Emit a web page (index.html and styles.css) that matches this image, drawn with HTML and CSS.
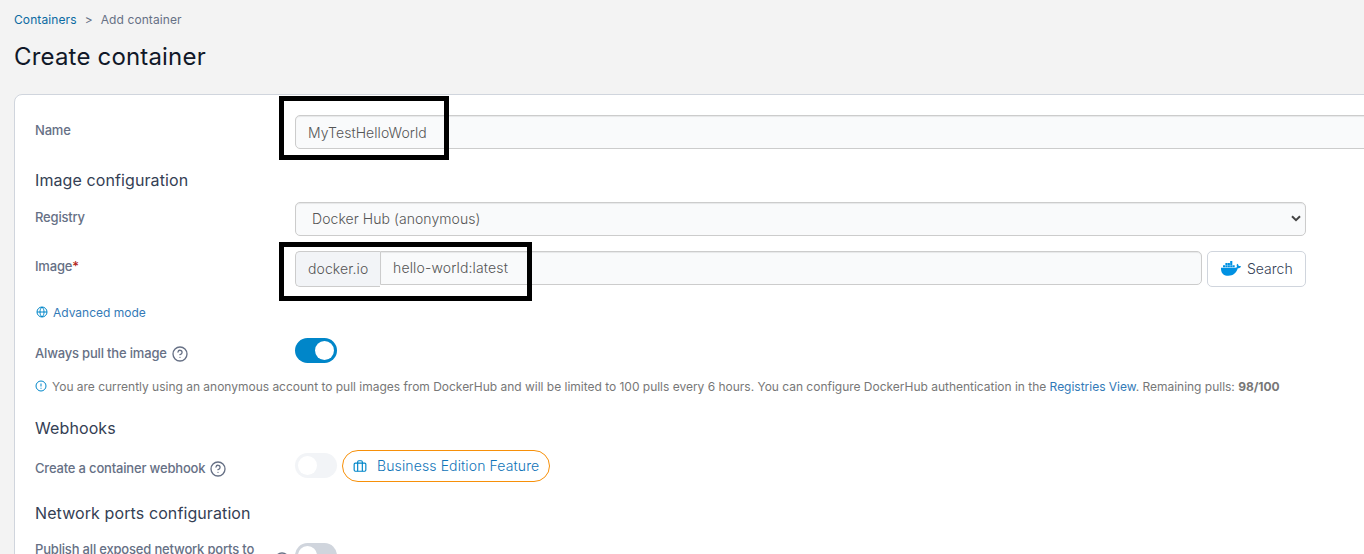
FILE: index.html
```html
<!DOCTYPE html>
<html lang="en">
<head>
<meta charset="utf-8">
<title>Create container</title>
<link rel="stylesheet" href="styles.css">
</head>
<body>
<header class="page-header">
  <nav class="breadcrumbs"><a class="crumb-link">Containers</a><span class="separator">&gt;</span><span class="crumb">Add container</span></nav>
  <h1 class="page-title">Create container</h1>
</header>
<main class="card">
  <div class="row row-name">
    <label class="label"><span>Name</span></label>
    <div class="field field-name"><span>MyTestHelloWorld</span></div>
    <div class="highlight highlight-name"></div>
  </div>
  <h2 class="section section-image">Image configuration</h2>
  <div class="row row-registry">
    <label class="label"><span>Registry</span></label>
    <div class="field field-select"><span>Docker Hub (anonymous)</span>
      <svg class="chevron" viewBox="0 0 10 7"><path d="M1 1.2 5 5.2 9 1.2" fill="none" stroke="#444" stroke-width="2"/></svg>
    </div>
  </div>
  <div class="row row-image">
    <label class="label"><span>Image</span><span class="required">*</span></label>
    <div class="addon"><span>docker.io</span></div>
    <div class="field field-image"><span>hello-world:latest</span></div>
    <button class="search">
      <svg class="whale" viewBox="0 0 20 15" fill="#0091e2"><path d="M0 6.700h14.300c.8 0 1.400-.2 1.800-.6-.6-1-.6-2.300.2-3.300.9.600 1.300 1.300 1.400 2.200.8-.1 1.700 0 2.300.4-.4 1.100-1.400 1.800-3.200 1.800C15.300 12 12 14.700 7.400 14.700 2.700 14.700-.3 12.200 0 6.700z"/><path d="M2 4.300h2.100v2H2zM4.400 4.300h2.100v2H4.400zM6.800 4.300h2.100v2H6.800zM9.200 4.300h2.100v2H9.200zM11.600 4.300h2.100v2h-2.100zM4.400 2.100h2.100v2H4.400zM6.800 2.100h2.100v2H6.800zM9.200 2.100h2.100v2H9.200zM9.200 0h2.100v1.900H9.200z"/></svg>
      <span>Search</span>
    </button>
    <div class="highlight highlight-image"></div>
  </div>
  <div class="advanced">
    <svg class="globe" viewBox="0 0 24 24"><circle cx="12" cy="12" r="10"/><path d="M2 12h20M12 2c3 3 4 6 4 10s-1 7-4 10c-3-3-4-6-4-10s1-7 4-10z"/></svg>
    <a>Advanced mode</a>
  </div>
  <div class="row row-pull">
    <label class="label"><span>Always pull the image</span>
      <svg class="help" viewBox="0 0 24 24"><circle cx="12" cy="12" r="10.500"/><path d="M9 9a3 3 0 0 1 6 1c0 2-3 3-3 3M12 17h.01"/></svg>
    </label>
    <div class="toggle toggle-on"><i class="knob"></i></div>
  </div>
  <div class="info">
    <svg class="alert" viewBox="0 0 24 24"><circle cx="12" cy="12" r="10"/><path d="M12 7v6M12 15.500v2"/></svg>
    <p>You are currently using an anonymous account to pull images from DockerHub and will be limited to 100 pulls every 6 hours. You can configure DockerHub authentication in the <a>Registries View</a>. Remaining pulls: <b>98/100</b></p>
  </div>
  <h2 class="section section-webhooks">Webhooks</h2>
  <div class="row row-webhook">
    <label class="label"><span>Create a container webhook</span>
      <svg class="help" viewBox="0 0 24 24"><circle cx="12" cy="12" r="10.500"/><path d="M9 9a3 3 0 0 1 6 1c0 2-3 3-3 3M12 17h.01"/></svg>
    </label>
    <div class="toggle toggle-disabled"><i class="knob"></i></div>
    <div class="badge">
      <svg class="briefcase" viewBox="0 0 24 24"><rect x="2" y="7" width="20" height="14" rx="2"/><path d="M16 21V5a2 2 0 0 0-2-2h-4a2 2 0 0 0-2 2v16"/></svg>
      <span>Business Edition Feature</span>
    </div>
  </div>
  <h2 class="section section-ports">Network ports configuration</h2>
  <div class="row row-publish">
    <label class="label"><span class="publish-text">Publish all exposed network ports to</span>
      <svg class="help" viewBox="0 0 24 24"><circle cx="12" cy="12" r="10.500"/><path d="M9 9a3 3 0 0 1 6 1c0 2-3 3-3 3M12 17h.01"/></svg>
    </label>
    <div class="toggle"><i class="knob"></i></div>
  </div>
</main>
</body>
</html>
```
FILE: styles.css
```css
* { box-sizing: border-box; }
html, body { height: 554px; overflow: hidden; }
body { margin: 0; background: #f3f3f3; font-family: Inter, "Liberation Sans", sans-serif; font-size: 14px; color: #555; }
.page-header { height: 94px; padding: 12px 14px 0; }
.breadcrumbs { display: flex; height: 16px; line-height: 16px; font-size: 12px; letter-spacing: .1px; color: #667085; }
.crumb-link { color: #0b6aa2; }
.separator { margin: 0 8px; }
.page-title { margin: 14px 0 0; font-size: 24px; line-height: 30px; font-weight: 400; letter-spacing: .18px; color: #101828; }
.card { width: 1400px; height: 480px; margin-left: 14px; padding: 20px 0 0 20px; background: #fff; border: 1px solid #d0d5dd; border-radius: 8px; }
.row { display: flex; align-items: flex-start; position: relative; }
.label { display: flex; flex: none; width: 260px; font-size: 13px; line-height: 18px; font-weight: 500; letter-spacing: -.18px; color: #667085; }
.required { color: #b42318; }
.field { display: flex; align-items: center; height: 34px; padding: 0 12px 1px; border: 1px solid #ccc; border-radius: 5px; background: #f9fafb; box-shadow: inset 0 1px 1px rgba(0,0,0,.075); font-weight: 300; letter-spacing: .06px; }
.row-name .label { padding-top: 6px; }
.field-name { width: 1110px; padding-top: 1px; padding-bottom: 0; }
.section { margin: 0; height: 22px; font-size: 16px; line-height: 22px; font-weight: 400; letter-spacing: .1px; color: #344054; }
.section-image { margin-top: 20px; }
.row-registry { margin-top: 11px; }
.row-registry .label, .row-image .label { padding-top: 6px; }
.field-select { width: 1011px; padding: 0 4px 1px 16px; justify-content: space-between; }
.chevron { width: 10px; height: 7px; }
.row-image { margin-top: 15px; height: 36px; }
.addon { display: flex; align-items: center; width: 85px; height: 36px; padding: 0 0 1px 12px; border: 1px solid #ccc; border-right: 0; border-radius: 5px 0 0 5px; background: #f2f4f7; font-weight: 300; letter-spacing: .1px; }
.field-image { width: 822px; border-radius: 0 5px 5px 0; letter-spacing: .15px; }
.search { display: flex; align-items: center; gap: 6px; width: 99px; height: 36px; margin-left: 5px; padding: 0 0 1px 13px; border: 1px solid #d0d5dd; border-radius: 5px; background: #fff; font: inherit; font-weight: 300; color: #344054; }
.whale { width: 20px; height: 15px; margin-top: -1px; }
.highlight { position: absolute; border: 5px solid #000; }
.highlight-name { left: 244px; top: -19px; width: 170px; height: 64px; }
.highlight-image { left: 244px; top: -9px; width: 253px; height: 59px; }
.advanced { display: flex; align-items: center; gap: 5px; height: 16px; margin-top: 17px; padding-left: 1px; font-size: 12px; color: #337ab7; }
svg { flex: none; }
.globe, .alert, .briefcase { width: 12px; height: 12px; fill: none; stroke: #0086c9; stroke-width: 2; }
.row-pull { margin-top: 18px; height: 25px; }
.row-pull .label { padding-top: 6px; }
.help { width: 16px; height: 16px; margin: 2px 0 0 5px; fill: none; stroke: #667085; stroke-width: 2; stroke-linecap: round; overflow: visible; }
.toggle { display: flex; flex: none; align-items: center; width: 42px; height: 25px; padding: 0 3px; border-radius: 13px; background: #d0d5dd; }
.knob { width: 19px; height: 19px; border-radius: 50%; background: #fff; }
.toggle-on { justify-content: flex-end; background: #0086c9; }
.toggle-disabled { margin-top: 3px; background: #f2f4f7; }
.info { display: flex; align-items: center; gap: 5px; height: 16px; margin-top: 15px; font-size: 12px; letter-spacing: -.015px; color: #777; white-space: nowrap; }
.info p { margin: 0; }
.info a { color: #337ab7; }
.info b { font-weight: 700; }
.section-webhooks { margin-top: 23px; }
.row-webhook { margin-top: 11px; height: 32px; }
.row-webhook .label { padding-top: 9px; }
.badge { display: flex; align-items: center; width: 208px; height: 32px; margin-left: 5px; padding: 0 0 1px 10px; border: 1px solid #f79009; border-radius: 16px; font-weight: 300; letter-spacing: .12px; color: #0f74b8; white-space: nowrap; }
.briefcase { width: 14px; height: 14px; margin-right: 10px; }
.section-ports { margin-top: 20px; }
.row-publish { margin-top: 19px; }
.row-publish .label { margin-top: -3px; }
.publish-text { width: 235px; }
.row-publish .help { margin: 12px 0 0 4px; }
```
